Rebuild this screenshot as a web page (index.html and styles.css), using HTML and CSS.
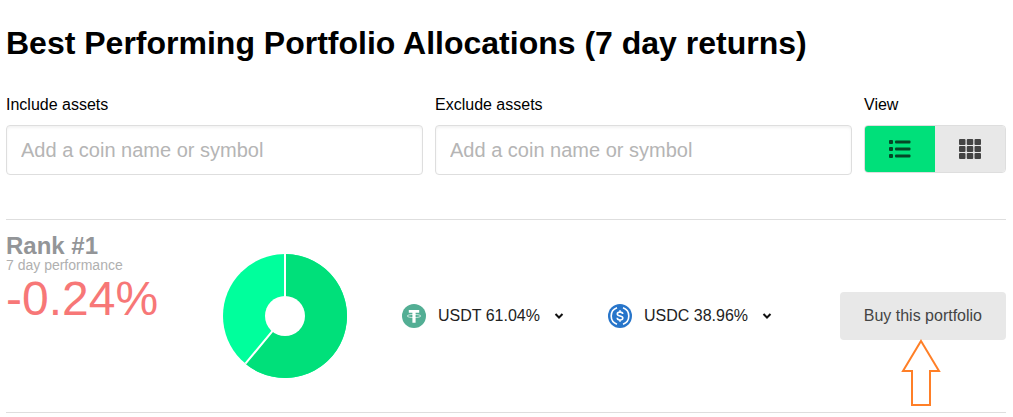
FILE: index.html
```html
<!DOCTYPE html>
<html lang="en">
<head>
    <meta charset="UTF-8" />
    <meta name="viewport" content="width=device-width, initial-scale=1.0"/>
    <title>Best Performing Portfolio Allocations</title>

    <link rel="stylesheet" href="styles.css">
</head>
<body>
    <main class="page">
        <h1>Best Performing Portfolio Allocations (7 day returns)</h1>

        <form class="filters">
            <div class="field">
                <label for="include">Include assets</label>
                <input type="text" id="include" placeholder="Add a coin name or symbol">
            </div>
            <div class="field">
                <label for="exclude">Exclude assets</label>
                <input type="text" id="exclude" placeholder="Add a coin name or symbol">
            </div>
            <div class="field" role="group" aria-labelledby="viewLabel">
                <span id="viewLabel">View</span>
                <div class="toggle">
                    <button type="button" class="active" aria-label="List view" aria-pressed="true">
                        <svg width="22" height="20" viewBox="0 0 22 20">
                            <rect x="0" y="1" width="4" height="4" rx="1"/>
                            <rect x="0" y="8" width="4" height="4" rx="1"/>
                            <rect x="0" y="15" width="4" height="4" rx="1"/>
                            <rect x="6" y="1.5" width="15.5" height="3" rx="1"/>
                            <rect x="6" y="8.5" width="15.5" height="3" rx="1"/>
                            <rect x="6" y="15.5" width="15.5" height="3" rx="1"/>
                        </svg>
                    </button>
                    <button type="button" aria-label="Grid view" aria-pressed="false">
                        <svg width="22" height="20" viewBox="0 0 22 20">
                            <rect x="0" y="0" width="6.5" height="6" rx="1"/>
                            <rect x="7.75" y="0" width="6.5" height="6" rx="1"/>
                            <rect x="15.5" y="0" width="6.5" height="6" rx="1"/>
                            <rect x="0" y="7" width="6.5" height="6" rx="1"/>
                            <rect x="7.75" y="7" width="6.5" height="6" rx="1"/>
                            <rect x="15.5" y="7" width="6.5" height="6" rx="1"/>
                            <rect x="0" y="14" width="6.5" height="6" rx="1"/>
                            <rect x="7.75" y="14" width="6.5" height="6" rx="1"/>
                            <rect x="15.5" y="14" width="6.5" height="6" rx="1"/>
                        </svg>
                    </button>
                </div>
            </div>
        </form>

        <section class="portfolio">
            <div class="rank">
                <h2>Rank #1</h2>
                <p class="period">7 day performance</p>
                <p class="change">-0.24%</p>
            </div>

            <svg class="donut" width="124" height="124" viewBox="0 0 124 124" role="img" aria-label="USDT 61.04%, USDC 38.96%">
                <circle cx="62" cy="62" r="62" fill="#00ff9c"/>
                <path d="M62 62V0A62 62 0 1 1 22.4 109.7Z" fill="#00e07a"/>
                <path d="M62 0V62L22.4 109.7" fill="none" stroke="#fff" stroke-width="2"/>
                <circle cx="62" cy="62" r="20" fill="#fff"/>
            </svg>

            <div class="coins">
                <button type="button" class="coin">
                    <svg width="24" height="24" viewBox="0 0 24 24">
                        <circle cx="12" cy="12" r="12" fill="#53ae94"/>
                        <ellipse cx="12" cy="12" rx="6.8" ry="1.6" fill="none" stroke="#fff" stroke-width=".7"/>
                        <path d="M6.800 6h10.400v2.800h-3.600v10h-3.200v-10H6.800z" fill="#fff"/>
                    </svg>
                    <span>USDT 61.04%</span>
                    <svg class="chevron" width="10" height="6" viewBox="0 0 10 6"><path d="M1.5 1L5 4.500L8.500 1"/></svg>
                </button>
                <button type="button" class="coin">
                    <svg width="24" height="24" viewBox="0 0 24 24">
                        <circle cx="12" cy="12" r="12" fill="#2775ca"/>
                        <g fill="none" stroke="#fff" stroke-width="1.6">
                            <path d="M9 3.800a8.700 8.700 0 0 0 0 16.400M15 3.800a8.700 8.700 0 0 1 0 16.400"/>
                            <path d="M14.700 10.100c0-1.300-1-2-2.700-2s-2.700.7-2.700 1.900c0 2.800 5.500 1.300 5.500 4 0 1.300-1.100 2-2.800 2s-2.800-.8-2.800-2.200M12 6.300v1.800M12 16v1.800"/>
                        </g>
                    </svg>
                    <span>USDC 38.96%</span>
                    <svg class="chevron" width="10" height="6" viewBox="0 0 10 6"><path d="M1.5 1L5 4.500L8.500 1"/></svg>
                </button>
            </div>

            <div class="buy">
                <button type="button" class="buy-btn">Buy this portfolio</button>
                <svg class="arrow" width="40" height="68" viewBox="0 0 40 68">
                    <path d="M20 2L38 32H29V66H11V32H2Z" fill="#fff" stroke="#ff7f27" stroke-width="2"/>
                </svg>
            </div>
        </section>
    </main>
</body>
</html>
```
FILE: styles.css
```css
* {
    box-sizing: border-box;
}

body {
    margin: 0;
    font-family: "Liberation Sans", Arial, sans-serif;
    font-size: 16px;
    line-height: 20px;
    color: #000;
    background: #fff;
}

h1, h2, p {
    margin: 0;
}

button, input {
    font-family: inherit;
    font-size: 16px;
}

.page {
    padding: 24px 7px 0 6px;
}

h1 {
    font-size: 32px;
    line-height: 38px;
}

.filters {
    display: grid;
    grid-template-columns: 1fr 1fr 142px;
    gap: 12px;
    padding: 33px 0 44px;
}

.field {
    display: flex;
    flex-direction: column;
    gap: 10px;
}

.field input {
    width: 100%;
    height: 50px;
    padding: 0 14px;
    font-size: 20px;
    border: 1px solid #dedede;
    border-radius: 4px;
    box-shadow: inset 0 2px 3px rgba(0, 0, 0, 0.05);
}

.field input::placeholder {
    color: #b5b5b5;
}

.toggle {
    display: flex;
    height: 48px;
    border: 1px solid #dedede;
    border-radius: 4px;
    overflow: hidden;
}

.toggle button {
    flex: 1;
    display: flex;
    align-items: center;
    justify-content: center;
    padding: 0;
    border: none;
    background: #e8e8e8;
    fill: #444;
    cursor: pointer;
}

.toggle .active {
    background: #00e07a;
    fill: #054526;
}

.portfolio {
    display: grid;
    grid-template-columns: 217px 124px 1fr auto;
    align-items: center;
    border-top: 1px solid #dedede;
    border-bottom: 1px solid #dedede;
    padding: 12px 0;
}

.rank {
    align-self: start;
}

.rank h2 {
    font-size: 24px;
    line-height: 28px;
    color: #939598;
}

.period {
    font-size: 14px;
    line-height: 11px;
    color: #b0b0b0;
}

.change {
    font-size: 48px;
    line-height: 56px;
    color: #f77777;
}

.donut {
    margin: 22px 0;
}

.coins {
    display: flex;
    gap: 44px;
    padding-left: 55px;
}

.coin {
    display: flex;
    align-items: center;
    gap: 12px;
    padding: 0;
    border: none;
    background: none;
    color: #222;
    cursor: pointer;
}

.chevron {
    margin-left: 2px;
    fill: none;
    stroke: #111;
    stroke-width: 2;
}

.buy {
    position: relative;
}

.buy-btn {
    height: 48px;
    padding: 0 24px;
    border: none;
    border-radius: 4px;
    background: #e8e8e8;
    color: #444;
    cursor: pointer;
}

/* pointer drawn over the row, just under the button */
.arrow {
    position: absolute;
    top: 47px;
    left: 61px;
}
```
